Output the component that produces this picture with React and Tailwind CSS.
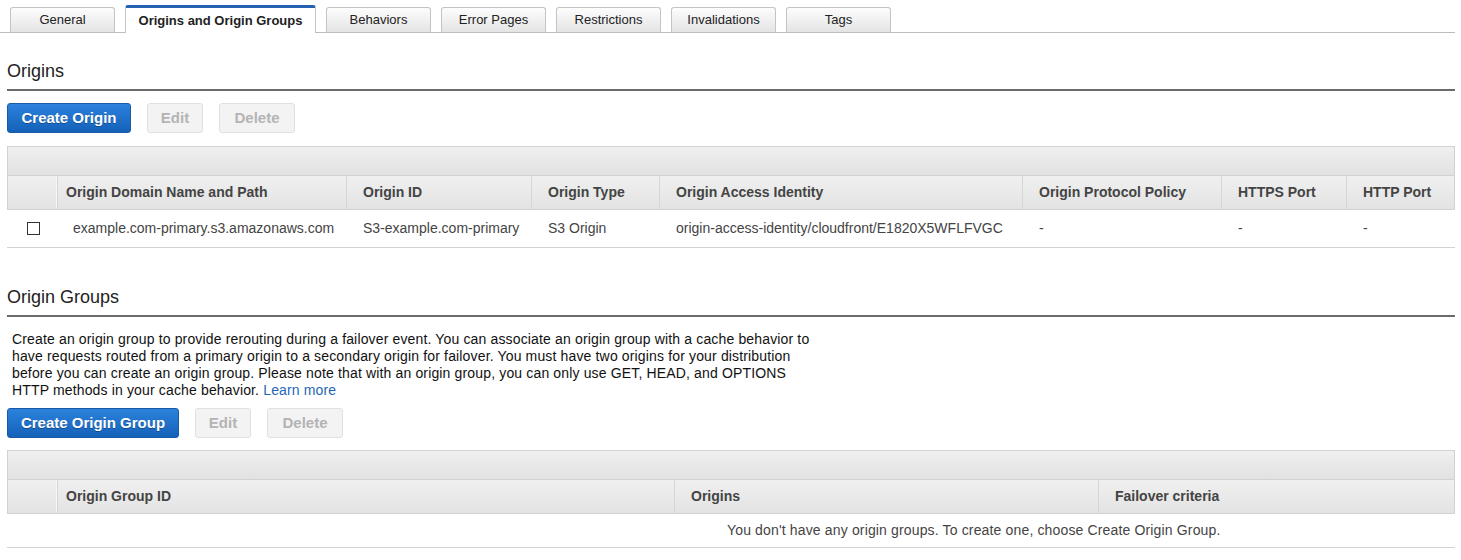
const tabs = ['General', 'Origins and Origin Groups', 'Behaviors', 'Error Pages', 'Restrictions', 'Invalidations', 'Tags'];

const originCols = [
  { label: 'Origin Domain Name and Path', w: 'w-[290px]', value: 'example.com-primary.s3.amazonaws.com', first: true },
  { label: 'Origin ID', w: 'w-[185px]', value: 'S3-example.com-primary' },
  { label: 'Origin Type', w: 'w-[128px]', value: 'S3 Origin' },
  { label: 'Origin Access Identity', w: 'w-[363px]', value: 'origin-access-identity/cloudfront/E1820X5WFLFVGC' },
  { label: 'Origin Protocol Policy', w: 'w-[199px]', value: '-' },
  { label: 'HTTPS Port', w: 'w-[125px]', value: '-' },
  { label: 'HTTP Port', w: 'flex-1', value: '-' },
];

const groupCols = [
  { label: 'Origin Group ID', w: 'w-[618px]', first: true },
  { label: 'Origins', w: 'w-[424px]' },
  { label: 'Failover criteria', w: 'flex-1' },
];

function Tabs() {
  return (
    <div className="mr-[6px] flex h-[33px] items-end gap-[10px] border-b border-[#bcbcbc] pl-[10px]">
      {tabs.map((t, i) =>
        i === 1 ? (
          <div
            key={t}
            className="relative -mb-px flex h-[28px] w-[191px] items-center justify-center rounded-t-[3px] border border-b-0 border-[#c4c4c4] border-t-[3px] border-t-[#2461b0] bg-white text-[13px] font-bold text-[#222]"
          >
            {t}
          </div>
        ) : (
          <div
            key={t}
            className="flex h-[25px] w-[105px] items-center justify-center rounded-t-[3px] border border-b-0 border-[#c4c4c4] bg-gradient-to-b from-[#fdfdfd] to-[#e4e4e4] text-[13px] text-[#222]"
          >
            {t}
          </div>
        )
      )}
    </div>
  );
}

function Heading({ children }) {
  return (
    <div className="mr-[6px] ml-[7px] border-b-2 border-[#6b6b6b] pb-[7px] text-[18px] leading-[22px] text-[#222]">
      {children}
    </div>
  );
}

function Buttons({ create, createW }) {
  return (
    <div className="ml-[7px] flex items-center gap-[16px]">
      <button
        className={`h-[30px] ${createW} rounded-[3px] border border-[#1a5aa6] bg-gradient-to-b from-[#2c82dc] to-[#1461b9] text-[15px] font-bold text-white [text-shadow:0_1px_0_rgba(0,0,0,0.3)]`}
      >
        {create}
      </button>
      <button className="h-[30px] w-[56px] rounded-[3px] border border-[#e0e0e0] bg-[#f3f3f3] text-[15px] font-bold text-[#b4b4b4]">
        Edit
      </button>
      <button className="h-[30px] w-[76px] rounded-[3px] border border-[#e0e0e0] bg-[#f3f3f3] text-[15px] font-bold text-[#b4b4b4]">
        Delete
      </button>
    </div>
  );
}

function TableHead({ cols }) {
  return (
    <>
      <div className="h-[30px] border border-[#d2d2d2] bg-gradient-to-b from-[#efefef] to-[#e2e2e2]" />
      <div className="flex h-[34px] border-x border-b border-[#d2d2d2] bg-gradient-to-b from-[#f0f0f0] to-[#e3e3e3]">
        <div className="w-[49px] border-r border-[#f7f7f7]" />
        {cols.map((c, i) => (
          <div
            key={c.label}
            className={`${c.w} flex items-center text-[14px] font-bold text-[#444] ${c.first ? 'pl-[8px]' : 'pl-[16px]'} ${i < cols.length - 1 ? 'border-r border-[#d6d6d6]' : ''} ${i === 0 ? 'border-l border-[#c8c8c8]' : ''}`}
          >
            {c.label}
          </div>
        ))}
      </div>
    </>
  );
}

export default function App() {
  return (
    <div className="h-[560px] w-[1461px] overflow-hidden bg-white font-['Liberation_Sans',Arial,sans-serif] text-[#444]">
      <Tabs />

      <div className="mt-[27px]">
        <Heading>Origins</Heading>
      </div>
      <div className="mt-[12px]">
        <Buttons create="Create Origin" createW="w-[124px]" />
      </div>

      <div className="mt-[13px] mr-[6px] ml-[7px]">
        <TableHead cols={originCols} />
        <div className="flex h-[38px] items-center border-b border-[#d2d2d2] text-[14px] text-[#444]">
          <div className="flex w-[50px] pl-[20px]">
            <span className="h-[13px] w-[13px] border border-[#333] bg-white" />
          </div>
          {originCols.map((c) => (
            <div key={c.label} className={`${c.w} pl-[16px] whitespace-nowrap`}>
              {c.value}
            </div>
          ))}
        </div>
      </div>

      <div className="mt-[38px]">
        <Heading>Origin Groups</Heading>
      </div>
      <p className="mt-[14px] ml-[12px] w-[830px] text-[14px] leading-[17px] tracking-[0.15px] text-[#111]">
        Create an origin group to provide rerouting during a failover event. You can associate an origin group with a cache behavior to
        <br />
        have requests routed from a primary origin to a secondary origin for failover. You must have two origins for your distribution
        <br />
        before you can create an origin group. Please note that with an origin group, you can only use GET, HEAD, and OPTIONS
        <br />
        HTTP methods in your cache behavior. <a className="text-[#1f67b5]">Learn more</a>
      </p>
      <div className="mt-[9px]">
        <Buttons create="Create Origin Group" createW="w-[172px]" />
      </div>

      <div className="mt-[12px] mr-[6px] ml-[7px]">
        <TableHead cols={groupCols} />
        <div className="flex h-[34px] items-center border-b border-[#d2d2d2] pl-[720px] text-[14px] tracking-[0.15px] text-[#444]">
          You don't have any origin groups. To create one, choose Create Origin Group.
        </div>
      </div>
    </div>
  );
}
